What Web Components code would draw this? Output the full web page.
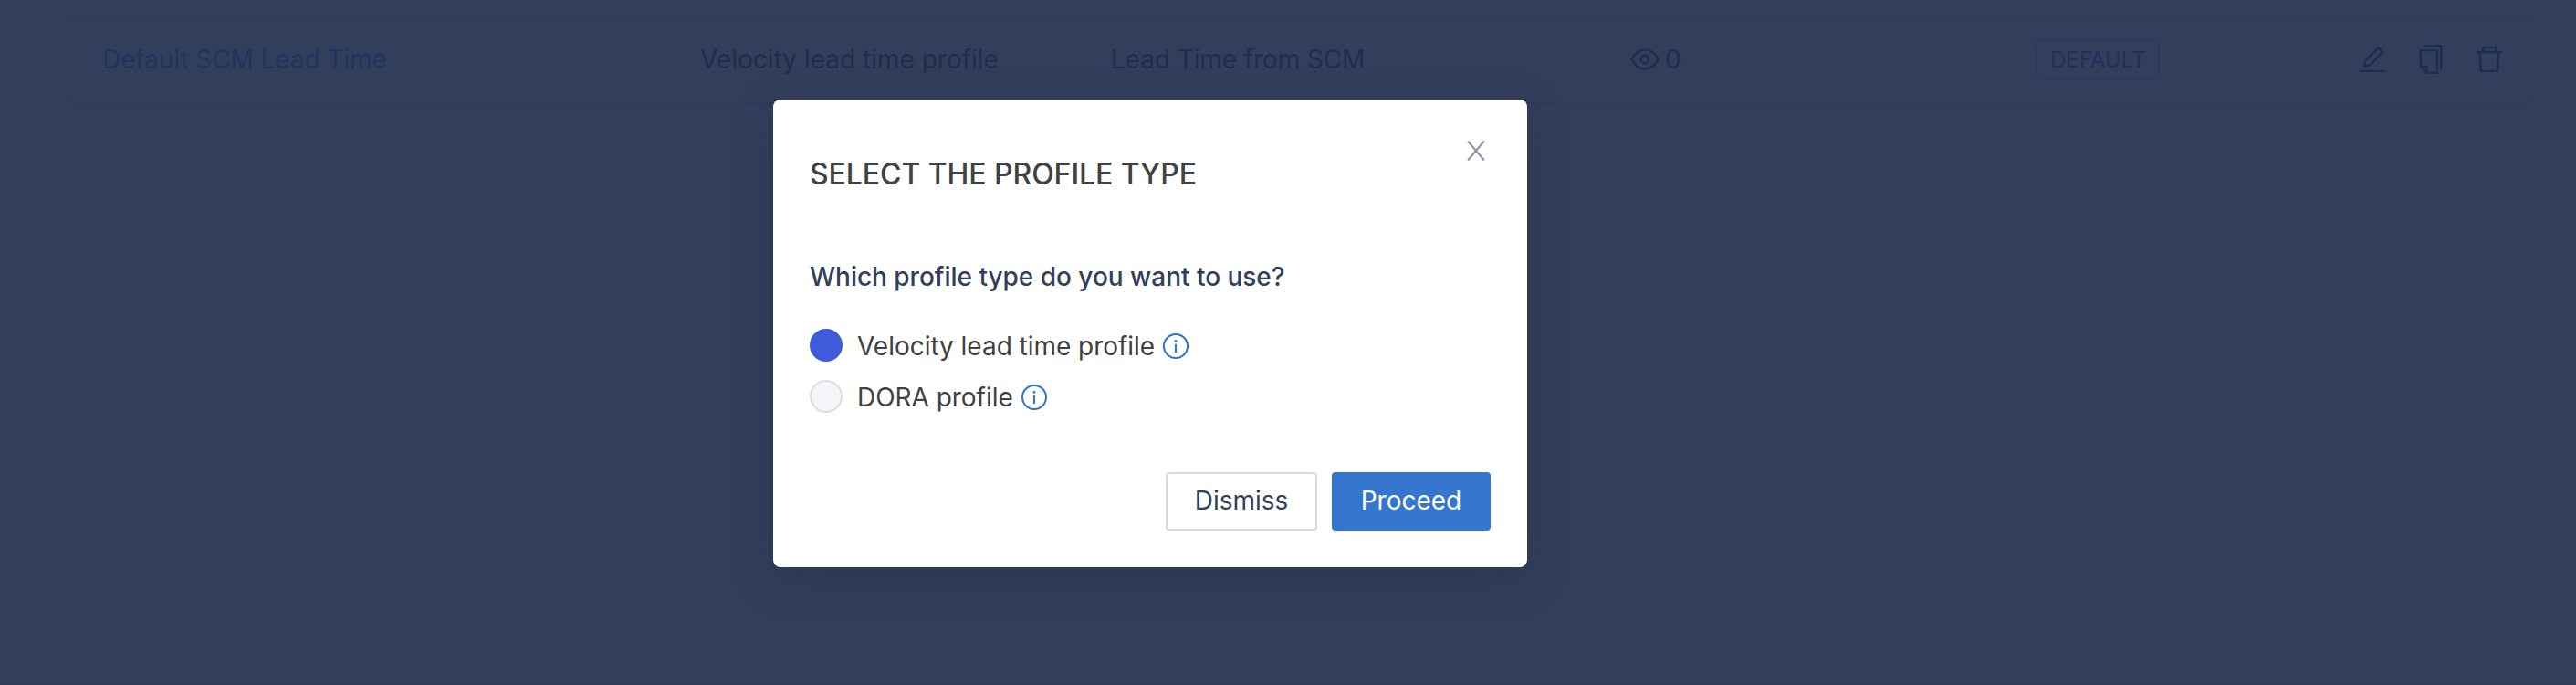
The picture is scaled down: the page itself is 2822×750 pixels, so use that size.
<!DOCTYPE html>
<html lang="en">
<head>
<meta charset="utf-8">
<title>Profiles</title>
<style>
html,body{margin:0;padding:0;height:100%}
body{background:#323f5c;font-family:Inter,"Liberation Sans",sans-serif;font-size:28px;overflow:hidden}
</style>
</head>
<body>
<profiles-page></profiles-page>
<script>
const define = (name, html) => customElements.define(name, class extends HTMLElement {
  constructor() {
    super();
    const t = document.createElement('template');
    t.innerHTML = html;
    this.attachShadow({ mode: 'open' }).appendChild(t.content.cloneNode(true));
  }
});

const ICONS = {
  eye: [32, 24, '<path d="M1.4 12C5 5 9.8 1.4 16 1.4S27 5 30.6 12C27 19 22.200 22.600 16 22.600S5 19 1.400 12Z" stroke-width="2.500"/><circle cx="16" cy="12" r="4.300" stroke-width="2.400"/>'],
  edit: [28, 28, '<path d="M0 27H28" stroke-width="2.400"/><path d="M20.600 1.700L25.200 6.300L11 20.500L5.200 21.400L6 15.500Z" stroke-width="2.300"/>'],
  copy: [26, 32, '<path d="M5 1.200H24.300V27.500" stroke-width="2.300"/><path d="M2.200 6.200H20V30.800H8.400L1.700 24.300V6.200Z" stroke-width="2.300"/><path d="M2 24H8.500V30.500" stroke-width="2.300"/>'],
  trash: [28, 28, '<path d="M0 6.200H28" stroke-width="2.300"/><path d="M7.200 6V1.200H21V6M3.700 6.500L4.700 26.800H23.300L24.300 6.500" stroke-width="2.300" stroke-linejoin="round"/>'],
  close: [20, 22, '<path d="M1.100 0.500L18.900 21.500M18.900 0.500L1.100 21.500" stroke-width="2.100"/>'],
  info: [28, 28, '<circle cx="14" cy="14" r="13" stroke-width="2"/><path d="M14 11.700V21" stroke-width="2"/><circle cx="14" cy="8.400" r="1.400" fill="currentColor" stroke="none"/>']
};
customElements.define('ui-icon', class extends HTMLElement {
  connectedCallback() {
    const [w, h, body] = ICONS[this.getAttribute('name')];
    this.attachShadow({ mode: 'open' }).innerHTML =
      `<style>:host{display:block;flex:none;width:${w}px;height:${h}px}svg{display:block}</style>
       <svg width="${w}" height="${h}" viewBox="0 0 ${w} ${h}" fill="none" stroke="currentColor">${body}</svg>`;
  }
});

define('status-tag', `<style>
:host{box-sizing:border-box;display:flex;width:136px;height:44px;padding-left:14px;border:2px solid #2c3963;border-radius:8px;color:#262c60;font-size:24px;line-height:42px;white-space:nowrap}
</style><slot></slot>`);

define('profile-row', `<style>
:host{box-sizing:border-box;display:grid;grid-template-columns:655px 450px 569px 444px 355px 1fr;align-items:center;height:98px;margin:0 46px 0 74px;padding-left:38px;border:solid #303c58;border-width:2px 0;border-radius:0 0 10px 10px;color:#202d50;white-space:nowrap;line-height:34px}
.name{color:#20355f;letter-spacing:-.08px}.desc{color:#1f2d55;letter-spacing:-.1px}
.views{display:flex;align-items:center;gap:6px}
.actions{display:flex;align-items:center;color:#1f2c52}
.actions :nth-child(2){margin-left:37px}.actions :nth-child(3){margin-left:37px}
</style>
<span class="name"><slot name="name"></slot></span>
<span><slot name="type"></slot></span>
<span class="desc"><slot name="description"></slot></span>
<span class="views"><ui-icon name="eye"></ui-icon><slot name="views"></slot></span>
<slot name="tag"></slot>
<div class="actions"><ui-icon name="edit"></ui-icon><ui-icon name="copy"></ui-icon><ui-icon name="trash"></ui-icon></div>`);

define('radio-option', `<style>
:host{display:flex;align-items:center;height:36px;color:#414141;white-space:nowrap}
.dot{box-sizing:border-box;width:36px;height:36px;border:2px solid #dcdee2;border-radius:50%;background:#f4f5f8;margin-right:16px}
:host([checked]) .dot{background:#3f5bdb;border-color:#3f5bdb}
.label{line-height:34px;padding-top:2px;margin-right:9px;letter-spacing:-.03px}
ui-icon{color:#2f74d0;margin-top:2px}
</style><span class="dot"></span><span class="label"><slot></slot></span><ui-icon name="info"></ui-icon>`);

define('ui-button', `<style>
:host{box-sizing:border-box;display:flex;justify-content:center;height:64px;width:166px;border:2px solid #d9d9d9;border-radius:4px;color:#323f5c;line-height:58px;background:#fff}
:host([primary]){width:174px;background:#3475cd;border-color:#3475cd;color:#fff}
</style><slot></slot>`);

define('modal-dialog', `<style>
:host{box-sizing:border-box;display:flex;flex-direction:column;width:826px;height:512px;padding:45px 40px 40px;border-radius:8px;background:#fff;box-shadow:0 12px 48px rgba(30,20,40,.24)}
header{display:flex;justify-content:space-between;height:60px}
h2{margin:13px 0 0;font-size:32px;line-height:48px;font-weight:500;letter-spacing:-.07px;color:#414141;white-space:nowrap}
header ui-icon{color:#8b94a6;margin-right:6px}
.body{margin-top:67px;flex:1}
footer{display:flex;justify-content:flex-end;gap:16px}
</style>
<header><h2><slot name="title"></slot></h2><ui-icon name="close"></ui-icon></header>
<div class="body"><slot></slot></div>
<footer><slot name="actions"></slot></footer>`);

define('profiles-page', `<style>
:host{box-sizing:border-box;display:block;height:750px;padding-top:16px;border-bottom:1px solid #2c3753}
modal-dialog{position:absolute;left:847px;top:109px}
.question{margin:0;font-weight:500;line-height:44px;color:#323f5c;white-space:nowrap;letter-spacing:-.02px}
.options{display:flex;flex-direction:column;gap:20px;margin-top:35px}
</style>
<profile-row>
<span slot="name">Default SCM Lead Time</span>
<span slot="type">Velocity lead time profile</span>
<span slot="description">Lead Time from SCM</span>
<span slot="views">0</span>
<status-tag slot="tag">DEFAULT</status-tag>
</profile-row>
<modal-dialog>
<span slot="title">SELECT THE PROFILE TYPE</span>
<p class="question">Which profile type do you want to use?</p>
<div class="options">
<radio-option checked>Velocity lead time profile</radio-option>
<radio-option>DORA profile</radio-option>
</div>
<ui-button slot="actions">Dismiss</ui-button>
<ui-button slot="actions" primary>Proceed</ui-button>
</modal-dialog>`);
</script>
</body>
</html>
